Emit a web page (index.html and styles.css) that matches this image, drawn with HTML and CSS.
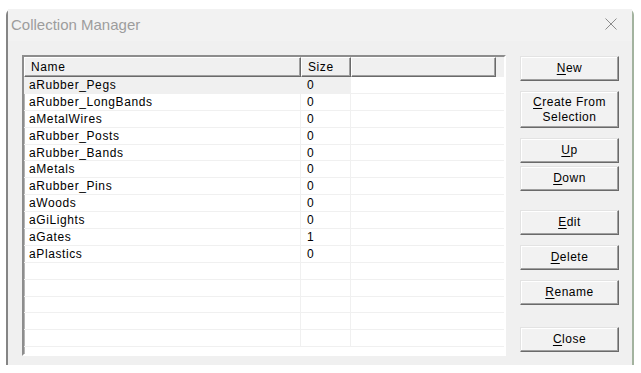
FILE: index.html
```html
<!DOCTYPE html>
<html lang="en">
<head>
    <meta charset="UTF-8">
    <title>Collection Manager</title>
    <link rel="stylesheet" href="styles.css">
</head>
<body>
    <div class="window">
        <div class="titlebar">
            <span class="title">Collection Manager</span>
            <svg class="close" width="12" height="12" viewBox="0 0 12 12">
                <path d="M0.5 0.5 L11.5 11.5 M11.5 0.5 L0.5 11.5" stroke="#8c8c8c" stroke-width="1" fill="none"/>
            </svg>
        </div>
        <div class="client">
            <div class="listview">
                <div class="header">
                    <div class="hcell col-name">Name</div>
                    <div class="hcell col-size">Size</div>
                    <div class="hcell col-extra"></div>
                </div>
                <div class="rows">
                    <div class="row selected"><span class="cell col-name">aRubber_Pegs</span><span class="cell col-size">0</span><span class="cell col-extra"></span></div>
                    <div class="row"><span class="cell col-name">aRubber_LongBands</span><span class="cell col-size">0</span><span class="cell col-extra"></span></div>
                    <div class="row"><span class="cell col-name">aMetalWires</span><span class="cell col-size">0</span><span class="cell col-extra"></span></div>
                    <div class="row"><span class="cell col-name">aRubber_Posts</span><span class="cell col-size">0</span><span class="cell col-extra"></span></div>
                    <div class="row"><span class="cell col-name">aRubber_Bands</span><span class="cell col-size">0</span><span class="cell col-extra"></span></div>
                    <div class="row"><span class="cell col-name">aMetals</span><span class="cell col-size">0</span><span class="cell col-extra"></span></div>
                    <div class="row"><span class="cell col-name">aRubber_Pins</span><span class="cell col-size">0</span><span class="cell col-extra"></span></div>
                    <div class="row"><span class="cell col-name">aWoods</span><span class="cell col-size">0</span><span class="cell col-extra"></span></div>
                    <div class="row"><span class="cell col-name">aGiLights</span><span class="cell col-size">0</span><span class="cell col-extra"></span></div>
                    <div class="row"><span class="cell col-name">aGates</span><span class="cell col-size">1</span><span class="cell col-extra"></span></div>
                    <div class="row"><span class="cell col-name">aPlastics</span><span class="cell col-size">0</span><span class="cell col-extra"></span></div>
                    <div class="row"><span class="cell col-name"></span><span class="cell col-size"></span><span class="cell col-extra"></span></div>
                    <div class="row"><span class="cell col-name"></span><span class="cell col-size"></span><span class="cell col-extra"></span></div>
                    <div class="row"><span class="cell col-name"></span><span class="cell col-size"></span><span class="cell col-extra"></span></div>
                    <div class="row"><span class="cell col-name"></span><span class="cell col-size"></span><span class="cell col-extra"></span></div>
                    <div class="row"><span class="cell col-name"></span><span class="cell col-size"></span><span class="cell col-extra"></span></div>
                </div>
            </div>

            <div class="buttons">
                <button class="btn btn-first"><u>N</u>ew</button>
                <button class="btn btn-tall gap-md"><u>C</u>reate From<br>Selection</button>
                <button class="btn gap-md"><u>U</u>p</button>
                <button class="btn gap-sm"><u>D</u>own</button>
                <button class="btn gap-lg"><u>E</u>dit</button>
                <button class="btn gap-md"><u>D</u>elete</button>
                <button class="btn gap-md"><u>R</u>ename</button>
                <button class="btn gap-xl"><u>C</u>lose</button>
            </div>
        </div>
    </div>
</body>
</html>
```

FILE: styles.css
```css
body {
    margin: 0;
    padding: 0;
    background-color: #ffffff;
    font-family: "Liberation Sans", Arial, sans-serif;
    font-size: 12px;
    letter-spacing: 0.6px;
    color: #000;
}
.window {
    margin: 9px 0 0 6px;
    width: 628px;
    height: 356px;
    box-sizing: border-box;
    background-color: #f0f0f0;
    border-left: 2px solid #858585;
    border-right: 2px solid #a3b39f;
    border-top-left-radius: 6px;
    border-top-right-radius: 6px;
}
.titlebar {
    height: 32px;
    display: flex;
    align-items: flex-start;
    justify-content: space-between;
    background-color: #f2f2f2;
}
.title {
    font-size: 15px;
    line-height: 18px;
    letter-spacing: 0;
    color: #9d9d9d;
    padding: 7px 0 0 3px;
}
.close {
    margin: 9px 15px 0 0;
}
.client {
    display: flex;
    padding: 14px 0 0 14px;
}

/* list view */
.listview {
    width: 484px;
    height: 301px;
    box-sizing: border-box;
    background-color: #fff;
    border: 2px solid;
    border-color: #8d8d8d #ffffff #ffffff #8d8d8d;
    box-shadow: inset 1px 1px 0 #b4b4b4;
    display: flex;
    flex-direction: column;
}
.header {
    display: flex;
    height: 20px;
    background-color: #f0f0f0;
    flex-shrink: 0;
}
.hcell {
    box-sizing: border-box;
    height: 20px;
    line-height: 18px;
    padding-left: 6px;
    border-top: 1px solid #fff;
    border-left: 1px solid #fff;
    border-right: 1px solid #6a6a6a;
    border-bottom: 1px solid #6a6a6a;
    box-shadow: inset -1px -1px 0 #a0a0a0;
}
.header .col-name {
    width: 277px;
}
.header .col-size {
    width: 50px;
}
.header .col-extra {
    width: 145px;
}
.row {
    display: flex;
    height: 16.9px;
    box-sizing: border-box;
    border-bottom: 1px solid #f0f0f0;
}
.cell {
    display: block;
    box-sizing: border-box;
    line-height: 16px;
    white-space: nowrap;
}
.row .col-name {
    width: 277px;
    padding-left: 5px;
    border-right: 1px solid #f0f0f0;
}
.row .col-size {
    width: 50px;
    padding-left: 6px;
    border-right: 1px solid #f0f0f0;
}
.row .col-extra {
    flex: 1;
}
.row.selected .col-name,
.row.selected .col-size {
    background-color: #f0f0f0;
}

/* buttons */
.buttons {
    display: flex;
    flex-direction: column;
    margin-left: 14px;
    width: 99px;
}
.btn {
    height: 25px;
    box-sizing: border-box;
    padding: 0;
    font-family: "Liberation Sans", Arial, sans-serif;
    font-size: 12px;
    letter-spacing: 0.5px;
    line-height: 15px;
    color: #000;
    background-color: #f2f2f2;
    border: 1px solid;
    border-color: #e3e3e3 #6a6a6a #6a6a6a #e3e3e3;
    box-shadow: inset -1px -1px 0 #a0a0a0, inset 1px 1px 0 #fff;
    border-radius: 0;
}
.btn u {
    text-decoration-thickness: 1px;
    text-underline-offset: 2px;
}
.btn-tall {
    height: 37px;
}
.btn-first {
    margin-top: 1px;
}
.gap-sm {
    margin-top: 3px;
}
.gap-md {
    margin-top: 10px;
}
.gap-lg {
    margin-top: 19px;
}
.gap-xl {
    margin-top: 22px;
}
```
